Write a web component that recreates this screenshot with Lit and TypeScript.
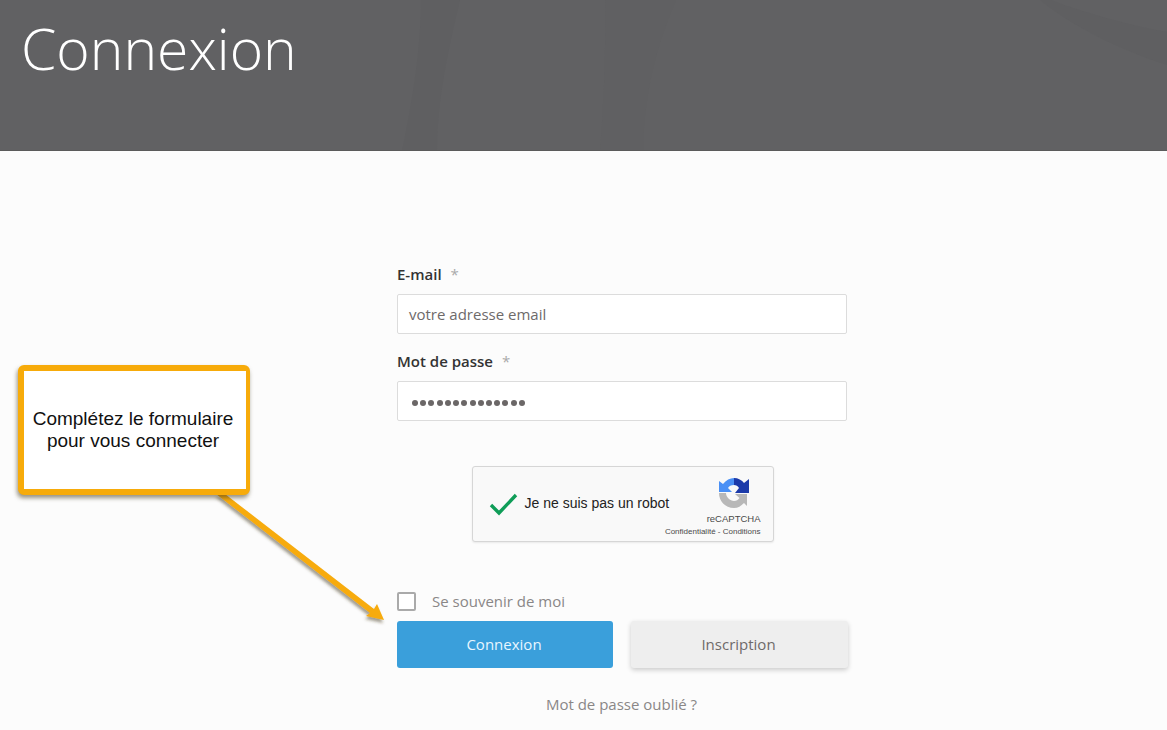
import { LitElement, html, css, svg } from "lit";
import { customElement } from "lit/decorators.js";

@customElement("app-root")
export class AppRoot extends LitElement {
  static styles = css`
    :host { display: block; position: relative; width: 1167px; height: 730px; overflow: hidden; background: #fcfcfc; font-family: "Open Sans", "Liberation Sans", sans-serif; color: #333; }
    .hero { position: relative; height: 151px; background: #616163; box-sizing: border-box; border-bottom: 1px solid #5b5b5b; overflow: hidden; }
    .hero svg { position: absolute; inset: 0; }
    h1 { position: relative; margin: 0; padding: 12px 0 0 21px; font-size: 57px; line-height: 72px; font-weight: 300; color: #fff; }
    .form { width: 450px; margin-left: 397px; padding-top: 112px; display: flex; flex-direction: column; }
    label.field { font-size: 15px; line-height: 22px; font-weight: 600; color: #333; height: 31px; }
    label.field span { color: #aaa; font-weight: 400; margin-left: 5px; }
    .input { box-sizing: border-box; height: 40px; border: 1px solid #dcdcdc; border-radius: 2px; background: #fff; padding: 0 11px; display: flex; align-items: center; font-size: 15px; color: #6e6a6a; margin-bottom: 16px; }
    .input.pw { margin-bottom: 0; }
    .dots { display: flex; gap: 2.23px; padding: 3px 0 0 3px; }
    .dots i { width: 6px; height: 6px; border-radius: 50%; background: #6b6767; }
    .captcha-wrap { display: flex; justify-content: center; padding: 45px 0 0 1px; }
    .captcha { box-sizing: border-box; width: 302px; height: 76px; background: #f9f9f9; border: 1px solid #d6d6d6; border-radius: 3px; box-shadow: 0 1px 2px rgba(0,0,0,.08); display: flex; align-items: center; padding-left: 16px; position: relative; font-family: "Liberation Sans", Arial, sans-serif; }
    .captcha .msg { font-size: 14px; color: #222; margin: -2px 0 0 6px; }
    .brand { position: absolute; right: 12px; top: 10px; display: flex; flex-direction: column; align-items: flex-end; color: #4a4a4a; }
    .brand svg { margin-right: 11px; }
    .brand .rc { font-size: 9.5px; line-height: 12px; margin-top: 4px; }
    .brand .legal { font-size: 8px; line-height: 10px; margin-top: 2px; white-space: nowrap; }
    .remember { display: flex; align-items: center; margin-top: 49px; height: 20px; font-size: 15px; color: #8a8787; }
    .box { box-sizing: border-box; width: 19px; height: 19px; border: 2px solid #aaa; border-radius: 2px; background: #fff; margin-right: 16px; }
    .actions { display: flex; gap: 18px; margin-top: 10px; width: 451px; }
    .btn { box-sizing: border-box; height: 47px; padding-bottom: 2px; border-radius: 3px; display: flex; align-items: center; justify-content: center; font-size: 15px; }
    .btn.primary { width: 216px; padding-right: 2px; background: #3a9fdb; color: #e8f6ff; }
    .btn.secondary { width: 217px; padding-right: 2px; background: #eeeeee; color: #6e6a6a; box-shadow: 0 2px 5px rgba(0,0,0,.2); }
    .forgot { text-align: center; margin-top: 25px; padding-right: 2px; box-sizing: border-box; font-size: 15px; line-height: 22px; color: #8a8787; width: 451px; }
    .callout { position: absolute; left: 18px; top: 365px; box-sizing: border-box; width: 232px; height: 130px; background: #fff; border: 6px solid #f7ab0a; border-right-width: 4px; border-radius: 6px; box-shadow: -1px 3px 4px rgba(70,60,30,.55); display: flex; align-items: center; justify-content: center; text-align: center; padding-right: 4px; font-family: "Liberation Sans", Arial, sans-serif; font-size: 19px; line-height: 22px; color: #111; }
    .arrow { position: absolute; left: 0; top: 0; width: 500px; height: 730px; pointer-events: none; }
  `;

  render() {
    return html`
      <header class="hero">
        <svg width="1167" height="151" viewBox="0 0 1167 151">
          ${svg`
            <path d="M402 151 C 415 90 421 40 421 0 L 460 0 C 448 50 437 100 437 151 Z" fill="#5f5f61"></path>
            <path d="M600 151 L 643 151 C 645 90 655 50 676 0 L 605 0 C 606 50 604 100 600 151 Z" fill="#606062"></path>
            <path d="M1040 0 L 1051 0 C 1090 15 1130 25 1167 32 L 1167 65 C 1120 50 1070 25 1040 0 Z" fill="#5f5f61"></path>
          `}
        </svg>
        <h1>Connexion</h1>
      </header>
      <main class="form">
        <label class="field">E-mail <span>*</span></label>
        <div class="input">votre adresse email</div>
        <label class="field">Mot de passe <span>*</span></label>
        <div class="input pw"><div class="dots">${Array.from({ length: 14 }, () => html`<i></i>`)}</div></div>
        <div class="captcha-wrap">
          <div class="captcha">
            <svg width="30" height="24" viewBox="0 0 30 24"><path d="M2 13 L10 21 L27 3" fill="none" stroke="#0f9d58" stroke-width="3.4"></path></svg>
            <span class="msg">Je ne suis pas un robot</span>
            <div class="brand">
              <svg width="32" height="32" viewBox="0 0 32 32">
                <path d="M16 1 C 20 1 24 3 26 6 L31 2 L31 16 L17 16 L21 11 C 20 9 18 8 16 8 Z" fill="#1c3aa9"></path>
                <path d="M16 1 L16 8 C13 8 11 9 10 11 L14 15 L1 15 L1 4 L5 7 C8 3 12 1 16 1 Z" fill="#4a90f5"></path>
                <path d="M1 16 L8 16 C8 20 12 24 16 24 C18.5 24 20 23 21.5 21 L17 17 L29 17 L29 29 L26 26 C23 29 20 31 16 31 C7 31 1 24 1 16 Z" fill="#b8b8b8"></path>
              </svg>
              <div class="rc">reCAPTCHA</div>
              <div class="legal">Confidentialité - Conditions</div>
            </div>
          </div>
        </div>
        <div class="remember"><div class="box"></div>Se souvenir de moi</div>
        <div class="actions">
          <div class="btn primary">Connexion</div>
          <div class="btn secondary">Inscription</div>
        </div>
        <div class="forgot">Mot de passe oublié ?</div>
      </main>
      <svg class="arrow" viewBox="0 0 500 730">
        <defs><filter id="s" x="-20%" y="-20%" width="140%" height="140%"><feDropShadow dx="-1" dy="3" stdDeviation="1.6" flood-color="#463c1e" flood-opacity=".5"></feDropShadow></filter></defs>
        <path d="M216 494 L225 494 L374 609 L377 604 L384 620 L366 616 L370 613 Z" fill="#f7ab0a" filter="url(#s)"></path>
      </svg>
      <div class="callout">Complétez le formulaire<br />pour vous connecter</div>
    `;
  }
}
